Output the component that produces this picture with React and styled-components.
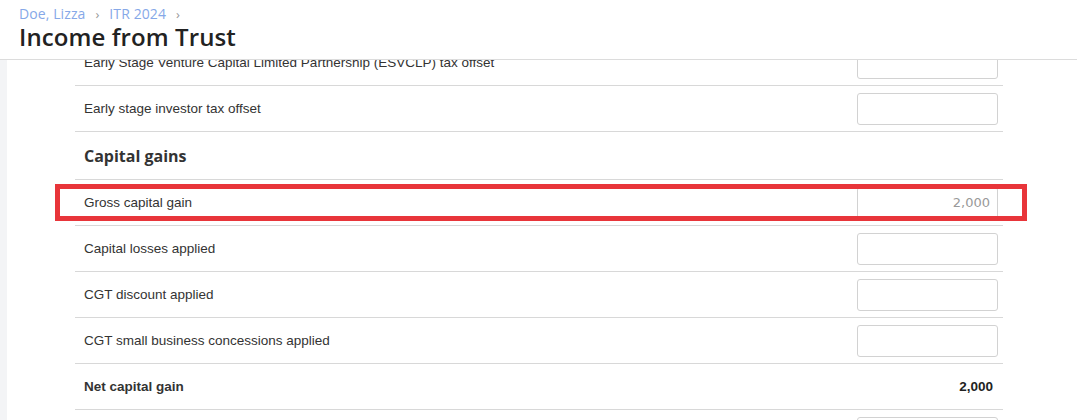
import styled, { createGlobalStyle } from "styled-components";

const GlobalStyle = createGlobalStyle`
  html, body {
    margin: 0;
    padding: 0;
    background: #fff;
    overflow: hidden;
  }
  * {
    box-sizing: border-box;
  }
`;

const Header = styled.header`
  position: fixed;
  top: 0;
  left: 0;
  right: 0;
  height: 60px;
  padding: 5px 19px 0;
  background: #fff;
  border-bottom: 1px solid #dcdcdc;
  font-family: "Open Sans", "Noto Sans", sans-serif;
  z-index: 10;
`;

const Breadcrumbs = styled.nav`
  display: flex;
  align-items: center;
  gap: 10px;
  font-size: 14px;
  line-height: 18px;
  color: #86a8e8;
`;

const Crumb = styled.span`
  color: #86a8e8;
  letter-spacing: 0.1px;
`;

const Chevron = styled.span`
  font-size: 13px;
  color: #999;
`;

const Title = styled.h1`
  margin: 0;
  font-size: 24px;
  font-weight: 600;
  line-height: 28px;
  color: #222;
  letter-spacing: 0.1px;
`;

const Page = styled.div`
  display: flex;
  min-height: 420px;
`;

const SideStrip = styled.div`
  width: 7px;
  flex: none;
  background: #f3f4f6;
`;

const Main = styled.main`
  flex: 1;
  padding: 40px 0 0 68px;
`;

const Form = styled.div`
  width: 928px;
  display: flex;
  flex-direction: column;
`;

const Row = styled.div`
  position: relative;
  display: flex;
  align-items: center;
  justify-content: space-between;
  height: ${p => (p.$heading ? 48 : 46)}px;
  padding: 0 5px 0 9px;
  border-bottom: 1px solid #d8d8d8;
  font-family: "Liberation Sans", Arial, sans-serif;
  font-size: 13.5px;
  color: #333;
`;

const Label = styled.span`
  font-weight: ${p => (p.$bold ? 700 : 400)};
`;

const SectionTitle = styled.h2`
  margin: 0;
  font-family: "Open Sans", "Noto Sans", sans-serif;
  font-size: 16px;
  font-weight: 700;
  color: #333;
`;

const Amount = styled.input`
  width: 141px;
  height: 32px;
  padding: 0 7px;
  border: 1px solid #d2d2d2;
  border-radius: 3px;
  background: #fff;
  text-align: right;
  font-family: "DejaVu Sans", Verdana, sans-serif;
  font-size: 13px;
  color: #999;
  outline: none;
`;

const Total = styled.span`
  padding-right: 5px;
  font-weight: 700;
  color: #222;
`;

const Highlight = styled.div`
  position: absolute;
  top: 4px;
  left: -20px;
  width: 972px;
  height: 37px;
  border: 5px solid #e8353a;
  pointer-events: none;
`;

const rows = [
  { label: "Early Stage Venture Capital Limited Partnership (ESVCLP) tax offset" },
  { label: "Early stage investor tax offset" },
  { heading: "Capital gains" },
  { label: "Gross capital gain", value: "2,000", readOnly: true, highlight: true },
  { label: "Capital losses applied" },
  { label: "CGT discount applied" },
  { label: "CGT small business concessions applied" },
  { label: "Net capital gain", total: "2,000" },
  { label: "" },
];

export default function App() {
  return (
    <>
      <GlobalStyle />
      <Header>
        <Breadcrumbs>
          <Crumb>Doe, Lizza</Crumb>
          <Chevron>›</Chevron>
          <Crumb>ITR 2024</Crumb>
          <Chevron>›</Chevron>
        </Breadcrumbs>
        <Title>Income from Trust</Title>
      </Header>
      <Page>
        <SideStrip />
        <Main>
          <Form>
            {rows.map((r, i) =>
              r.heading ? (
                <Row key={i} $heading>
                  <SectionTitle>{r.heading}</SectionTitle>
                </Row>
              ) : (
                <Row key={i}>
                  <Label $bold={!!r.total}>{r.label}</Label>
                  {r.total ? (
                    <Total>{r.total}</Total>
                  ) : (
                    <Amount readOnly={r.readOnly} defaultValue={r.value || ""} />
                  )}
                  {r.highlight && <Highlight />}
                </Row>
              )
            )}
          </Form>
        </Main>
      </Page>
    </>
  );
}
